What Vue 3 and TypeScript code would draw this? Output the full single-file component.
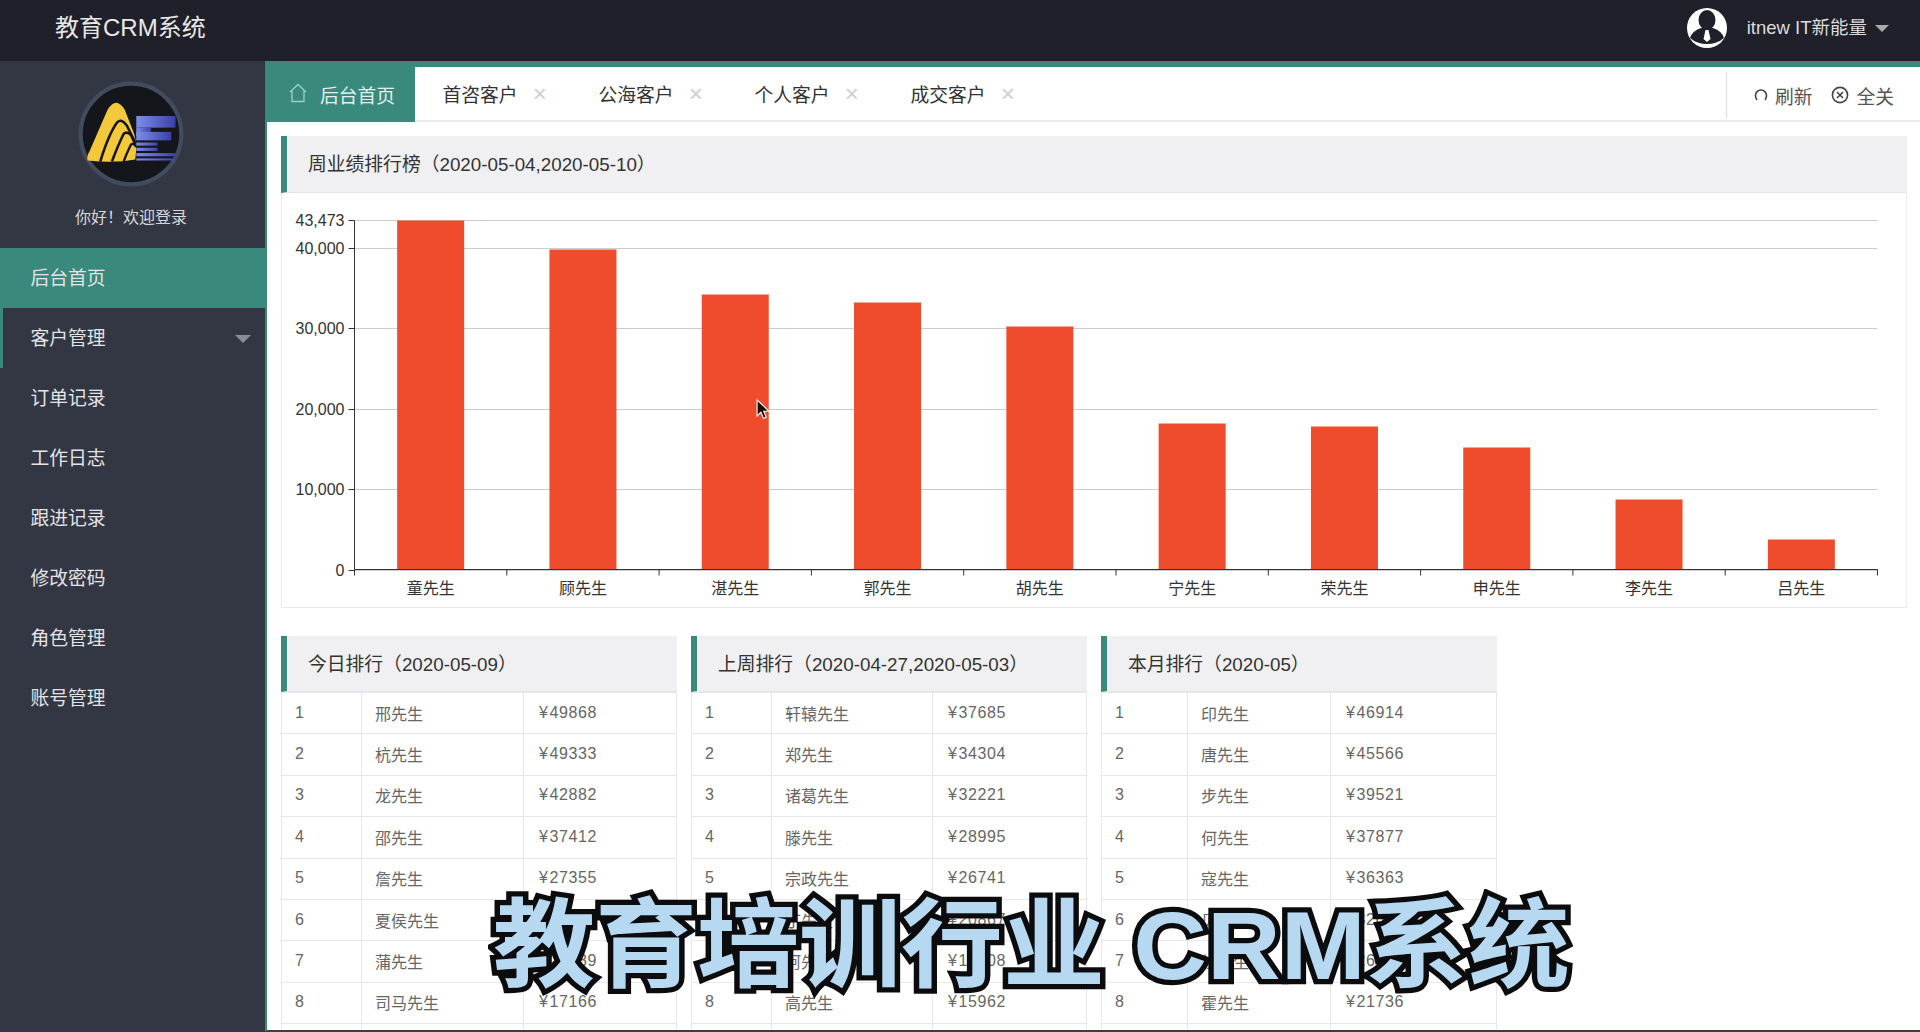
<template>
  <div class="page">
    <header class="topbar">
      <div class="brand">教育CRM系统</div>
      <div class="user">
        <svg class="user-pic" viewBox="0 0 40 40">
          <circle cx="20" cy="20" r="20" fill="#fff" />
          <ellipse cx="20" cy="12" rx="8.5" ry="10" fill="#1f2029" />
          <path d="M3 30Q5 23 14 20L26 20Q35 23 37 30Q30 36 20 36Q10 36 3 30Z" fill="#1f2029" />
          <path d="M18.5 22L21.5 22L23.5 31L20 34L16.5 31Z" fill="#fff" />
        </svg>
        <span class="user-name">itnew IT新能量</span>
        <span class="user-caret"></span>
      </div>
    </header>

    <div class="body">
      <aside class="sidebar">
        <div class="profile">
          <svg class="logo" viewBox="0 0 100 100">
            <defs>
              <linearGradient id="fBlue" x1="0" y1="0" x2="1" y2="0">
                <stop offset="0" stop-color="#7d8fe8" />
                <stop offset="1" stop-color="#3c3fa8" />
              </linearGradient>
            </defs>
            <circle cx="50" cy="50" r="47.5" fill="#15151c" stroke="#414c5e" stroke-width="4" />
            <path d="M9 75Q8 71 11 66L28 27Q36 14 44 27L53 50Q56 60 54 74Q35 78 9 75Z" fill="#f3c93b" />
            <path d="M21 76Q29 50 37 39Q41 35 46 42L54 58" fill="none" stroke="#15151c" stroke-width="2.4" />
            <path d="M32 76Q38 60 43 50Q46 47 50 51L55 62" fill="none" stroke="#15151c" stroke-width="2.4" />
            <path d="M43 76Q47 66 50 60Q52 58 55 62" fill="none" stroke="#15151c" stroke-width="2.2" />
            <rect x="55" y="33" width="37" height="11" fill="url(#fBlue)" />
            <rect x="55" y="44" width="14" height="8" fill="url(#fBlue)" />
            <rect x="55" y="48" width="33" height="8" fill="url(#fBlue)" />
            <rect x="55" y="58" width="20" height="3" fill="url(#fBlue)" />
            <rect x="55" y="63" width="20" height="3" fill="url(#fBlue)" />
            <rect x="55" y="68" width="37" height="3" fill="url(#fBlue)" />
            <rect x="55" y="73" width="37" height="2" fill="url(#fBlue)" />
          </svg>
          <div class="welcome">你好！欢迎登录</div>
        </div>
        <nav class="menu">
          <a
            v-for="(item, i) in menu"
            :key="item"
            class="menu-item"
            :class="{ active: i === 0, open: i === 1 }"
          >
            <span class="menu-text">{{ item }}</span>
            <span v-if="i === 1" class="menu-caret"></span>
          </a>
        </nav>
      </aside>

      <main class="main">
        <div class="tabs">
          <div class="tab home">
            <svg class="home-icon" viewBox="0 0 20 20">
              <path d="M2 9L10 1.5L18 9M4 7.5V18.5H16V7.5" fill="none" stroke="#9fd0c8" stroke-width="1.3" />
            </svg>
            <span class="tab-text">后台首页</span>
          </div>
          <div v-for="t in tabs" :key="t" class="tab">
            <span class="tab-text">{{ t }}</span>
            <span class="tab-close">×</span>
          </div>
          <div class="tab-tools">
            <span class="tool">
              <svg class="tool-icon" viewBox="0 0 14 14">
                <path d="M3 12Q1.5 10 1.5 7.5A5.5 5.5 0 0 1 12.5 7.5Q12.5 10 11 12" fill="none" stroke="#444" stroke-width="1.6" />
              </svg>
              刷新
            </span>
            <span class="tool">
              <svg class="tool-icon big" viewBox="0 0 18 18">
                <circle cx="9" cy="9" r="7.6" fill="none" stroke="#444" stroke-width="1.6" />
                <path d="M6 6L12 12M12 6L6 12" stroke="#444" stroke-width="1.6" />
              </svg>
              全关
            </span>
          </div>
        </div>

        <div class="content">
          <section class="panel">
            <h3 class="panel-title">周业绩排行榜（2020-05-04,2020-05-10）</h3>
            <div class="chart-box">
              <svg class="chart" width="1624" height="414">
                <g v-for="t in yTicks" :key="t">
                  <line :x1="axisX" :x2="axisEnd" :y1="yOf(t)" :y2="yOf(t)" stroke="#ccc" />
                  <line :x1="axisX - 6" :x2="axisX" :y1="yOf(t)" :y2="yOf(t)" stroke="#333" />
                  <text :x="axisX - 10" :y="yOf(t) + 5" text-anchor="end" class="chart-label">{{ t.toLocaleString("en-US") }}</text>
                </g>
                <rect
                  v-for="(b, i) in bars"
                  :key="b.name"
                  :x="barX(i)"
                  :y="yOf(b.value)"
                  width="67"
                  :height="baseY - yOf(b.value)"
                  fill="#ef4c2d"
                />
                <line :x1="axisX" :x2="axisX" :y1="yOf(43473)" :y2="baseY" stroke="#333" />
                <line :x1="axisX" :x2="axisEnd" :y1="baseY" :y2="baseY" stroke="#333" />
                <line
                  v-for="n in 11"
                  :key="n"
                  :x1="axisX + (n - 1) * slot"
                  :x2="axisX + (n - 1) * slot"
                  :y1="baseY"
                  :y2="baseY + 6"
                  stroke="#333"
                />
                <text
                  v-for="(b, i) in bars"
                  :key="'l' + b.name"
                  :x="barX(i) + 33.5"
                  :y="baseY + 24"
                  text-anchor="middle"
                  class="chart-label"
                >{{ b.name }}</text>
              </svg>
            </div>
          </section>

          <div class="rank-row">
            <section v-for="r in ranks" :key="r.title" class="panel rank">
              <h3 class="panel-title">{{ r.title }}</h3>
              <table class="rank-table">
                <colgroup>
                  <col :style="{ width: r.cols[0] + 'px' }" />
                  <col :style="{ width: r.cols[1] + 'px' }" />
                  <col />
                </colgroup>
                <tbody>
                  <tr v-for="(row, i) in r.rows" :key="i">
                    <td>{{ i + 1 }}</td>
                    <td>{{ row[0] }}</td>
                    <td class="amount"><span class="yen">¥</span>{{ row[1] }}</td>
                  </tr>
                  <tr>
                    <td></td>
                    <td></td>
                    <td></td>
                  </tr>
                </tbody>
              </table>
            </section>
          </div>
        </div>
      </main>
    </div>

    <svg class="cursor" viewBox="0 0 14 20">
      <path d="M1 1V16L4.6 12.6L7 18.4L9.6 17.2L7.2 11.6H12Z" fill="#111" stroke="#fff" stroke-width="1" />
    </svg>
    <div class="caption">教育培训行业 CRM系统</div>
  </div>
</template>

<script setup lang="ts">
type Rank = { title: string; cols: number[]; rows: [string, number][] };

const menu = ["后台首页", "客户管理", "订单记录", "工作日志", "跟进记录", "修改密码", "角色管理", "账号管理"];
const tabs = ["首咨客户", "公海客户", "个人客户", "成交客户"];

const bars = [
  { name: "童先生", value: 43473 },
  { name: "顾先生", value: 39900 },
  { name: "湛先生", value: 34300 },
  { name: "郭先生", value: 33300 },
  { name: "胡先生", value: 30300 },
  { name: "宁先生", value: 18200 },
  { name: "荣先生", value: 17800 },
  { name: "申先生", value: 15200 },
  { name: "李先生", value: 8750 },
  { name: "吕先生", value: 3800 },
];
const yTicks = [0, 10000, 20000, 30000, 40000, 43473];

const axisX = 72.5;
const axisEnd = 1595.5;
const baseY = 376.5;
const slot = (axisEnd - axisX) / 10;
const yOf = (v: number) => Math.round(baseY - v * 0.00804) + 0.5;
const barX = (i: number) => axisX + slot * i + (slot - 67) / 2;

const ranks: Rank[] = [
  {
    title: "今日排行（2020-05-09）",
    cols: [80, 162],
    rows: [
      ["邢先生", 49868],
      ["杭先生", 49333],
      ["龙先生", 42882],
      ["邵先生", 37412],
      ["詹先生", 27355],
      ["夏侯先生", 24506],
      ["蒲先生", 20689],
      ["司马先生", 17166],
    ],
  },
  {
    title: "上周排行（2020-04-27,2020-05-03）",
    cols: [80, 161],
    rows: [
      ["轩辕先生", 37685],
      ["郑先生", 34304],
      ["诸葛先生", 32221],
      ["滕先生", 28995],
      ["宗政先生", 26741],
      ["丁先生", 20867],
      ["阿先生", 18608],
      ["高先生", 15962],
    ],
  },
  {
    title: "本月排行（2020-05）",
    cols: [86, 143],
    rows: [
      ["印先生", 46914],
      ["唐先生", 45566],
      ["步先生", 39521],
      ["何先生", 37877],
      ["寇先生", 36363],
      ["贝先生", 32667],
      ["杜先生", 26683],
      ["霍先生", 21736],
    ],
  },
];
</script>

<style>
html,
body {
  margin: 0;
  height: 100%;
  overflow: hidden;
  background: #fff;
}
</style>

<style scoped>
.page {
  position: relative;
  height: 1032px;
  overflow: hidden;
  display: flex;
  flex-direction: column;
  font-family: "Liberation Sans", "Noto Sans CJK SC", sans-serif;
}

.topbar {
  height: 61px;
  flex: none;
  background: #1f2029;
  color: #e8e8e8;
  display: flex;
  align-items: center;
  justify-content: space-between;
  padding: 0 31px 0 55px;
}

.brand {
  font-size: 24px;
  margin-top: -10px;
}

.user {
  display: flex;
  align-items: center;
  margin-top: -5px;
}

.user-pic {
  width: 40px;
  height: 40px;
  margin-right: 20px;
}

.user-name {
  font-size: 18.5px;
  color: #dcdcdc;
  margin-top: -4px;
}

.user-caret {
  width: 0;
  height: 0;
  margin-left: 8px;
  border-left: 7.5px solid transparent;
  border-right: 7.5px solid transparent;
  border-top: 7px solid #aaa;
}

.body {
  flex: 1;
  display: flex;
  min-height: 0;
}

.sidebar {
  width: 265px;
  flex: none;
  background: #333744;
}

.profile {
  height: 187px;
  box-sizing: border-box;
  padding: 20px 3px 0 0;
  display: flex;
  flex-direction: column;
  align-items: center;
}

.logo {
  width: 106px;
  height: 106px;
}

.welcome {
  margin-top: 17px;
  font-size: 16px;
  color: #d8d8d8;
}

.menu-item {
  height: 60px;
  box-sizing: border-box;
  padding-left: 30.5px;
  display: flex;
  align-items: center;
  justify-content: space-between;
  font-size: 18.8px;
  color: #e4e4e4;
}

.menu-text {
  margin-top: -3px;
}

.menu-item.active {
  background: #39897c;
}

.menu-item.open {
  padding-left: 27.5px;
  border-left: 3px solid #39897c;
}

.menu-caret {
  width: 0;
  height: 0;
  margin-right: 14px;
  margin-top: 2px;
  border-left: 8px solid transparent;
  border-right: 8px solid transparent;
  border-top: 8px solid #8a8d96;
}

.main {
  flex: 1;
  min-width: 0;
  display: flex;
  flex-direction: column;
  box-sizing: border-box;
  background: #fff;
  border-top: 6px solid #39897c;
  border-left: 2px solid #39897c;
  border-bottom: 2px solid #3a3f4a;
}

.tabs {
  height: 55px;
  flex: none;
  box-sizing: border-box;
  display: flex;
  border-bottom: 2px solid #e9e9e9;
  font-size: 18.8px;
  color: #333;
}

.tab {
  width: 156px;
  box-sizing: border-box;
  padding-left: 27.5px;
  display: flex;
  align-items: center;
}

.tab-text {
  margin-top: -1px;
}

.tab.home {
  width: 148px;
  height: 55px;
  padding-left: 21px;
  background: #39897c;
  color: #e2f1ee;
}

.home-icon {
  width: 20px;
  height: 20px;
  margin-right: 12px;
  margin-top: -4px;
}

.tab-close {
  width: 12px;
  margin-left: 15px;
  font-size: 24px;
  line-height: 24px;
  text-align: center;
  color: #d0d0d0;
}

.tab-tools {
  margin-left: auto;
  width: 194px;
  box-sizing: border-box;
  margin-top: 5px;
  margin-bottom: 2px;
  border-left: 1px solid #ddd;
  padding: 0 26px 0 27px;
  display: flex;
  align-items: center;
  justify-content: space-between;
  color: #555;
}

.tool {
  display: flex;
  align-items: center;
}

.tool-icon {
  width: 14px;
  height: 14px;
  margin-right: 7px;
}

.tool-icon.big {
  width: 18px;
  height: 18px;
}

.content {
  flex: 1;
  min-height: 0;
  overflow: hidden;
  padding: 14px 13px 0 14px;
}

.panel-title {
  margin: 0;
  height: 57px;
  box-sizing: border-box;
  padding: 0 0 3px 21px;
  display: flex;
  align-items: center;
  background: #f0f0f2;
  border-left: 6px solid #39897c;
  border-bottom: 1px solid #e6e6e6;
  font-size: 18.8px;
  font-weight: 400;
  color: #333;
}

.rank .panel-title {
  height: 56px;
}

.chart-box {
  height: 415px;
  box-sizing: border-box;
  border: 1px solid #ececec;
  border-top: none;
}

.chart {
  display: block;
}

.chart-label {
  font-size: 16px;
  fill: #333;
}

.rank-row {
  display: flex;
  gap: 14px;
  margin-top: 28px;
}

.rank {
  width: 396px;
  flex: none;
}

.rank-table {
  width: 100%;
  table-layout: fixed;
  border-collapse: collapse;
  font-size: 16px;
  color: #666;
}

.rank-table td {
  height: 41.4px;
  box-sizing: border-box;
  padding: 0 0 1px 13px;
  border: 1px solid #e8e8e8;
}

.rank-table .amount {
  padding-left: 15px;
  letter-spacing: 0.6px;
}

.yen {
  margin-right: 1px;
}

.cursor {
  position: absolute;
  left: 756px;
  top: 398px;
  width: 15px;
  height: 23px;
}

.caption {
  position: absolute;
  left: 493px;
  top: 887px;
  font-size: 102px;
  line-height: 118px;
  font-weight: 700;
  white-space: pre;
  color: #b6d9f1;
  -webkit-text-stroke: 11px #0c0c0e;
  paint-order: stroke fill;
  transform: scaleY(0.95);
}
</style>
